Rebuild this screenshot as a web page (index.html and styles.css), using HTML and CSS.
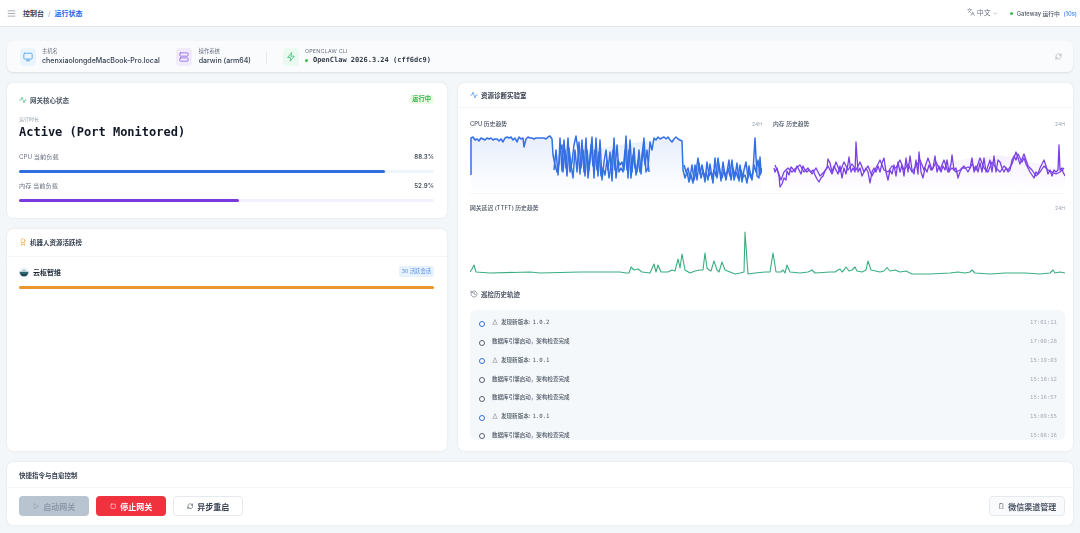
FILE: index.html
```html
<!DOCTYPE html>
<html lang="zh">
<head>
<meta charset="utf-8">
<title>运行状态</title>
<link rel="stylesheet" href="styles.css">
</head>
<body>
<header class="topbar">
  <div class="crumbs">
    <svg class="ic menu" viewBox="0 0 24 24"><path d="M3 5h18M3 12h18M3 19h18"/></svg>
    <span class="crumb">控制台</span><span class="sep">/</span><span class="crumb current">运行状态</span>
  </div>
  <div class="top-right">
    <svg class="ic lang" viewBox="0 0 24 24"><path d="m5 8 6 6M4 14l6-6 2-3M2 5h12M7 2h1M22 22l-5-10-5 10M14 18h6"/></svg>
    <span class="lang-text">中文</span>
    <svg class="ic chev" viewBox="0 0 24 24"><path d="m6 9 6 6 6-6"/></svg>
    <span class="gw"><i class="dot green"></i>Gateway 运行中 <b>(10s)</b></span>
  </div>
</header>

<main class="page">
  <section class="infobar">
    <div class="info">
      <span class="tile t-blue"><svg class="ic" viewBox="0 0 24 24"><rect x="2" y="3" width="20" height="14" rx="2"/><path d="M8 21h8M12 17v4"/></svg></span>
      <div class="info-text"><small>主机名</small><strong>chenxiaolongdeMacBook-Pro.local</strong></div>
    </div>
    <div class="info os">
      <span class="tile t-purple"><svg class="ic" viewBox="0 0 24 24"><rect x="2" y="2" width="20" height="8" rx="2"/><rect x="2" y="14" width="20" height="8" rx="2"/></svg></span>
      <div class="info-text"><small>操作系统</small><strong>darwin (arm64)</strong></div>
    </div>
    <div class="info cli">
      <span class="tile t-green"><svg class="ic" viewBox="0 0 24 24"><path d="M13 2 4 13h7l-1 9 10-12h-7z"/></svg></span>
      <div class="info-text"><small class="caps">OPENCLAW CLI</small><strong class="mono"><i class="dot green"></i>OpenClaw 2026.3.24 (cff6dc9)</strong></div>
    </div>
    <svg class="ic refresh" viewBox="0 0 24 24"><path d="M3 12a9 9 0 0 1 15-6.700L21 8M21 3v5h-5M21 12a9 9 0 0 1-15 6.700L3 16M3 21v-5h5"/></svg>
  </section>

  <div class="columns">
    <div class="left">
      <section class="card core">
        <div class="core-head">
          <h2><svg class="ic c-green" viewBox="0 0 24 24"><path d="M22 12h-4l-3 9L9 3l-3 9H2"/></svg>网关核心状态</h2>
          <span class="badge-run">运行中</span>
        </div>
        <p class="uptime-label">运行时长</p>
        <p class="uptime">Active (Port Monitored)</p>
        <div class="meter">
          <div class="meter-row"><span>CPU 当前负载</span><b>88.3%</b></div>
          <div class="track track-blue"><div class="fill fill-blue" style="width:88.3%"></div></div>
        </div>
        <div class="meter">
          <div class="meter-row"><span>内存 当前负载</span><b>52.9%</b></div>
          <div class="track track-purple"><div class="fill fill-purple" style="width:52.9%"></div></div>
        </div>
      </section>

      <section class="card board">
        <h2 class="board-title"><svg class="ic c-orange" viewBox="0 0 24 24"><circle cx="12" cy="8" r="6"/><path d="M15.5 13.5 17 22l-5-3-5 3 1.5-8.5"/></svg>机器人资源活跃榜</h2>
        <div class="board-body">
          <div class="bot-row">
            <span class="bot-name"><svg class="bot-logo" viewBox="0 0 20 20"><circle cx="10" cy="10" r="9.5" fill="#eef4f5"/><path d="M6 7.5c1-3 7-3 8 0z" fill="#7fa6b0"/><path d="M1 9.5h18c0 5.500-4 9.500-9 9.500s-9-4-9-9.500z" fill="#2f6672"/><path d="M4 14h12l-2 4H6z" fill="#1e4650"/></svg>云枢智维</span>
            <span class="badge-bot">30 活跃会话</span>
          </div>
          <div class="track-orange"></div>
        </div>
      </section>
    </div>

    <section class="card lab">
      <h2 class="lab-title"><svg class="ic c-blue" viewBox="0 0 24 24"><path d="M22 12h-4l-3 9L9 3l-3 9H2"/></svg>资源诊断实验室</h2>
      <div class="lab-body">
        <div class="chart-grid">
          <div class="chart">
            <div class="chart-head"><span>CPU 历史趋势</span><em>24H</em></div>
            <svg class="plot" viewBox="470 133 292 60" preserveAspectRatio="none">
              <defs>
                <linearGradient id="gBlue" x1="0" y1="0" x2="0" y2="1"><stop offset="0" stop-color="#3b78e7" stop-opacity=".12"/><stop offset="1" stop-color="#3b78e7" stop-opacity="0"/></linearGradient>
                <linearGradient id="gPurple" x1="0" y1="0" x2="0" y2="1"><stop offset="0" stop-color="#7c3aed" stop-opacity=".07"/><stop offset="1" stop-color="#7c3aed" stop-opacity="0"/></linearGradient>
              </defs>
              <polygon class="area-blue" points="471,193 471,138 553,138 553,155 653,140 683,140 683,165 762,165 762,193"/>
              <polyline class="line blue" points="471,175 471,138 473,137 475,140 477,139 479,141 481,138 483,139 485,140 487,138 489,139 491,138 493,140 495,139 497,139 499,141 501,139 503,142 505,138 507,137 509,138 511,137 513,140 515,138 517,142 519,137 521,139 523,138 524,147 526,139 528,137 530,138 532,138 534,139 536,138 538,138 540,138 542,138 544,138 546,139 548,137 550,136 552,139 553,155 555,165 557,172 559,163 560,138 562,171 564,140 566,168 568,138 570,172 572,162 574,145 576,136 578,150 580,174 582,140 584,172 586,138 588,178 590,160 592,137 594,178 596,138 598,176 600,140 602,180 604,162 606,150 608,170 610,152 612,181 614,138 616,178 618,160 620,165 622,162 624,170 626,136 628,178 630,140 632,172 634,148 636,175 638,160 640,172 642,155 644,138 646,172 648,168 650,142 652,150 654,138 656,140 658,137 660,139 662,138 664,137 666,139 668,137 670,140 672,142 674,139 676,137 678,139 680,140 682,141 683,170 685,178 687,172 689,182 691,175 693,183 695,165 697,180 699,163 701,178 703,170 705,182 707,162 709,176 711,172 713,183 715,158 717,178 719,165 721,181 723,162 725,176 727,172 729,160 731,180 733,168 735,176 737,163 739,181 741,170 743,177 745,175 747,183 749,166 751,178 753,172 755,138 757,176 759,178 760,157 761,172 762,168"/>
              <polyline class="line blue" points="554,170 556,150 558,175 560,150 562,145 563,172 565,150 567,176 569,148 571,165 573,178 575,150 577,172 579,142 581,168 583,150 585,176 587,150 589,170 591,145 593,166 595,150 597,170 599,152 601,176 603,168 605,175 607,160 609,178 611,165 613,150 615,170 617,145 619,172 621,168 623,172 625,150 627,170 629,150 631,178 633,155 635,168 637,172 639,150 641,174 643,148 645,165 647,150 649,172"/>
              <polyline class="line blue" points="684,165 686,172 688,168 690,178 692,165 694,180 696,172 698,158 700,174 702,165 704,176 706,172 708,180 710,164 712,178 714,170 716,176 718,158 720,172 722,178 724,170 726,180 728,168 730,176 732,160 734,180 736,172 738,178 740,165 742,182 744,170 746,162 748,178 750,172 752,180 754,165 756,172 758,160 760,175 762,170"/>
            </svg>
          </div>
          <div class="chart">
            <div class="chart-head"><span>内存 历史趋势</span><em>24H</em></div>
            <svg class="plot" viewBox="773 133 292 60" preserveAspectRatio="none">
              <polygon class="area-purple" points="774,193 774,170 856,165 900,165 960,160 1000,155 1065,170 1065,193"/>
              <polyline class="line purple" points="774,168 775,172 777,168 779,176 780,187 782,184 784,178 786,180 787,171 789,175 791,167 793,169 795,172 797,166 799,170 801,174 803,166 805,170 807,172 809,170 811,172 813,170 815,175 817,179 819,182 821,178 823,176 825,171 827,168 828,159 830,163 832,172 834,166 836,170 838,174 840,166 842,178 844,168 846,174 848,164 849,157 851,172 853,168 855,172 856,142 858,172 860,168 862,176 864,172 866,168 868,172 870,183 872,172 874,168 876,172 878,166 880,172 882,163 884,158 886,172 888,180 890,170 892,174 894,165 896,176 898,162 900,172 902,165 904,176 906,158 908,172 910,156 912,170 914,174 916,160 918,174 919,152 921,172 923,178 925,168 927,172 929,165 931,170 933,168 935,156 937,172 939,166 941,172 943,166 945,170 947,160 949,172 951,164 952,155 954,170 956,168 958,178 960,172 962,168 964,168 966,168 968,167 970,168 972,158 974,172 976,166 978,172 980,163 982,172 984,158 986,172 988,166 990,160 992,172 994,156 996,172 998,160 1000,162 1002,168 1004,172 1006,168 1008,172 1010,170 1012,160 1014,156 1016,160 1018,154 1020,158 1022,162 1024,158 1026,164 1028,168 1030,172 1032,175 1034,178 1036,172 1038,174 1040,168 1042,164 1044,160 1046,166 1048,174 1050,170 1052,176 1054,170 1056,172 1058,170 1059,145 1060,170 1062,168 1063,172 1065,176"/>
              <polyline class="line purple" points="775,165 778,172 781,180 784,172 788,168 792,172 796,168 800,165 804,172 808,168 812,174 816,168 820,176 824,172 828,166 832,174 836,162 840,172 844,162 848,170 852,164 856,170 860,162 864,172 868,166 872,176 876,168 880,160 884,170 888,172 892,166 896,168 900,160 904,170 908,164 912,172 916,166 920,160 924,170 928,158 932,170 936,162 940,170 944,160 948,172 952,168 956,172 960,170 964,166 968,172 972,164 976,170 980,158 984,168 988,172 992,162 996,168 1000,172 1004,166 1008,170 1012,164 1016,152 1020,164 1024,154 1028,166 1032,170 1036,176 1040,172 1044,166 1048,170 1052,172 1056,174 1060,172 1064,168"/>
            </svg>
          </div>
        </div>
        <hr class="rule">
        <div class="chart wide">
          <div class="chart-head"><span>网关延迟 (TTFT) 历史趋势</span><em>24H</em></div>
          <svg class="plot tall" viewBox="470 225 595 55" preserveAspectRatio="none">
            <polyline class="line green" points="470,272 472,269 474,265 476,272 490,273 530,272 540,273 580,272 620,272 626,273 629,273 631,267 634,270 638,269 642,272 650,273 654,264 656,272 658,265 661,272 668,272 672,270 675,271 678,259 680,268 682,254 685,270 690,273 695,271 700,270 703,270 705,253 707,268 709,270 711,271 714,261 717,270 719,272 722,262 725,270 730,272 735,274 740,273 744,272 745,232 748,274 755,273 765,272 770,272 773,253 776,272 781,272 783,270 785,273 787,265 790,272 800,273 808,272 812,270 815,273 830,272 835,272 838,270 840,269 842,272 844,270 846,267 849,271 852,270 855,267 857,271 862,272 866,270 868,261 871,270 880,272 884,271 887,267.500 890,271 895,270 900,272 906,271 908,272 912,274 930,274 950,273 958,272 965,273 970,272 972,270 975,273 990,274 1005,273 1025,273 1040,274 1050,273 1053,270 1055,273 1060,272 1065,273"/>
          </svg>
        </div>
        <h3 class="history-title"><svg class="ic c-gray" viewBox="0 0 24 24"><path d="M3 12a9 9 0 1 0 3-6.700L3 8M3 3v5h5M12 7v5l4 2"/></svg>巡检历史轨迹</h3>
        <div class="history">
          <div class="log"><i class="ring r-blue"></i><span class="msg"><svg class="ic up" viewBox="0 0 24 24"><path d="M12 4 5 18M12 4l7 14M3 21h18"/></svg>发现新版本: <code>1.0.2</code></span><time>17:01:11</time></div>
          <div class="log"><i class="ring r-gray"></i><span class="msg">数据库引擎启动，架构检查完成</span><time>17:00:28</time></div>
          <div class="log"><i class="ring r-blue"></i><span class="msg"><svg class="ic up" viewBox="0 0 24 24"><path d="M12 4 5 18M12 4l7 14M3 21h18"/></svg>发现新版本: <code>1.0.1</code></span><time>15:19:03</time></div>
          <div class="log"><i class="ring r-gray"></i><span class="msg">数据库引擎启动，架构检查完成</span><time>15:18:12</time></div>
          <div class="log"><i class="ring r-gray"></i><span class="msg">数据库引擎启动，架构检查完成</span><time>15:16:57</time></div>
          <div class="log"><i class="ring r-blue"></i><span class="msg"><svg class="ic up" viewBox="0 0 24 24"><path d="M12 4 5 18M12 4l7 14M3 21h18"/></svg>发现新版本: <code>1.0.1</code></span><time>15:09:55</time></div>
          <div class="log"><i class="ring r-gray"></i><span class="msg">数据库引擎启动，架构检查完成</span><time>15:08:16</time></div>
        </div>
      </div>
    </section>
  </div>

  <section class="card controls">
    <h2 class="controls-title">快捷指令与自愈控制</h2>
    <div class="actions">
      <div class="action-group">
        <button class="btn btn-disabled"><svg class="ic" viewBox="0 0 24 24"><path d="m6 3 14 9-14 9z"/></svg>启动网关</button>
        <button class="btn btn-stop"><svg class="ic" viewBox="0 0 24 24"><rect x="4" y="4" width="16" height="16" rx="2"/></svg>停止网关</button>
        <button class="btn btn-plain"><svg class="ic" viewBox="0 0 24 24"><path d="M3 12a9 9 0 0 1 15-6.700L21 8M21 3v5h-5M21 12a9 9 0 0 1-15 6.700L3 16M3 21v-5h5"/></svg>异步重启</button>
      </div>
      <button class="btn btn-wechat"><svg class="ic" viewBox="0 0 24 24"><rect x="6" y="2" width="12" height="20" rx="2"/></svg>微信渠道管理</button>
    </div>
  </section>
</main>
</body>
</html>
```
FILE: styles.css
```css
* { box-sizing: border-box; }
html, body { margin: 0; height: 100%; }
body {
  width: 1080px;
  height: 533px;
  overflow: hidden;
  background: #f4f7f9;
  color: #1f2937;
  font-family: Inter, "Noto Sans CJK SC", sans-serif;
  font-size: 6px;
  filter: blur(.4px);
}
h2, h3, p { margin: 0; }
.ic { width: 1em; height: 1em; fill: none; stroke: currentColor; stroke-width: 2; stroke-linecap: round; stroke-linejoin: round; flex: none; }

.topbar { height: 27px; background: #fff; border-bottom: 1px solid #e4e8ec; display: flex; align-items: center; justify-content: space-between; padding: 0 3px 0 7px; }
.crumbs { display: flex; align-items: center; font-size: 7px; font-weight: 600; color: #374151; }
.menu { font-size: 9px; color: #6b7280; margin-right: 7px; stroke-width: 1.6; }
.sep { margin: 0 4px; color: #9ca3af; font-weight: 400; }
.current { color: #2563eb; }
.top-right { display: flex; align-items: center; color: #6b7280; font-size: 7px; }
.lang { font-size: 8px; margin-right: 2px; stroke-width: 1.6; position: relative; top: -1px; }
.lang-text { font-size: 7px; position: relative; top: -1px; }
.chev { font-size: 5px; margin: 0 12px 0 2px; }
.gw { display: flex; align-items: center; font-size: 5.800px; gap: 2px; white-space: pre; color: #4b5563; font-weight: 500; }
.gw b { color: #3b82f6; font-weight: 500; }
.dot { display: inline-block; width: 3px; height: 3px; border-radius: 50%; flex: none; }
.dot.green { background: #3fb950; margin-right: 2px; }

.page { padding: 14px 7px 0; display: flex; flex-direction: column; gap: 11px; }
.infobar { height: 31px; background: #f9fbfc; border-radius: 6px; box-shadow: 0 1px 2px rgba(60,80,100,.14); display: flex; align-items: center; padding: 0 11px 0 13px; }
.info { display: flex; align-items: center; gap: 6px; }
.os { margin-left: 16px; gap: 7px; }
.cli { margin-left: 32px; position: relative; }
.cli::before { content: ""; position: absolute; left: -17px; top: 4px; height: 12px; width: 1px; background: #e5e9ed; }
.tile { width: 16px; height: 18px; border-radius: 4px; display: flex; align-items: center; justify-content: center; font-size: 10px; }
.t-blue { background: #eaf4fd; color: #4aa3e8; }
.t-purple { background: #f1ebfd; color: #9166ec; }
.t-green { background: #eafaf0; color: #3fc07a; }
.info-text { display: flex; flex-direction: column; gap: 2px; }
.info-text small { font-size: 5.300px; line-height: 6px; color: #6b7280; }
.info-text .caps { letter-spacing: .25px; }
.info-text strong { font-size: 7.050px; line-height: 9px; font-weight: 500; color: #374151; white-space: nowrap; }
.info-text .mono { font-family: "DejaVu Sans Mono", monospace; font-size: 7px; font-weight: 700; display: flex; align-items: center; color: #333c49; }
.mono .dot { margin-right: 5px; }
.refresh { margin-left: auto; font-size: 7px; color: #8a939f; stroke-width: 1.6; }

.columns { display: grid; grid-template-columns: 440px 615px; gap: 11px; height: 368px; }
.left { display: flex; flex-direction: column; gap: 11px; }
.card { background: #fff; border-radius: 6px; box-shadow: 0 0 2px rgba(60,80,100,.16); }
.card h2, .card h3 { display: flex; align-items: center; font-size: 6.500px; font-weight: 600; color: #4b5563; }
.card h2 .ic, .card h3 .ic { font-size: 8px; margin-right: 3px; }
.c-green { color: #42b883; }
.c-orange { color: #f5a742; }
.c-blue { color: #4f8de8; }
.c-gray { color: #6b7280; }

.core { height: 135px; padding: 12px 13px 0 12px; }
.core-head { display: flex; align-items: center; justify-content: space-between; height: 9px; }
.badge-run { background: #eefbe7; color: #35b34a; font-size: 6.300px; font-weight: 600; padding: 1px 3px; border-radius: 3px; line-height: 7px; }
.uptime-label { font-size: 5px; color: #9ca3af; line-height: 6px; margin-top: 12px; }
.uptime { font-family: "DejaVu Sans Mono", monospace; font-weight: 700; font-size: 12px; line-height: 15px; margin-top: 3px; color: #111827; }
.meter { margin-top: 9.500px; }
.uptime + .meter { margin-top: 13px; }
.meter-row { display: flex; justify-content: space-between; font-size: 6.200px; line-height: 8px; color: #6b7280; height: 8px; margin-bottom: 8.500px; }
.meter-row b { font-weight: 600; color: #4b5563; }
.track { height: 3px; border-radius: 2px; }
.track-blue { background: #eff5fd; }
.track-purple { background: #f4f0fd; }
.fill { height: 100%; border-radius: 2px; }
.fill-blue { background: #2f6de0; }
.fill-purple { background: #7b38dc; }

.board { flex: 1; display: flex; flex-direction: column; }
.board-title.board-title { height: 28px; padding: 0 12px 1px; border-bottom: 1px solid #f3f5f7; color: #374151; }
.board-title .ic { margin-right: 2px; }
.board-body { padding: 9px 13px 0 12px; }
.bot-row { display: flex; align-items: center; justify-content: space-between; height: 11px; }
.bot-name { display: flex; align-items: center; gap: 4px; font-size: 7px; font-weight: 600; color: #1f2937; }
.bot-logo { width: 10px; height: 10px; }
.badge-bot { background: #e8f2fe; color: #4f8ee8; font-size: 5.300px; padding: 2px 3px; border-radius: 2px; line-height: 7px; }
.track-orange { height: 3px; border-radius: 2px; background: #e8962e; margin-top: 8.500px; }

.lab { display: flex; flex-direction: column; overflow: hidden; }
.lab-title.lab-title { height: 25px; padding: 0 12px; border-bottom: 1px solid #f3f5f7; color: #374151; flex: none; }
.lab-body { padding: 12px 8px 11px 12px; flex: 1; display: flex; flex-direction: column; min-height: 0; }
.chart-grid { display: grid; grid-template-columns: 292px 292px; gap: 11px; }
.chart-head { display: flex; justify-content: space-between; font-size: 5.800px; font-weight: 500; color: #4b5563; line-height: 8px; height: 8px; }
.chart-head em { font-style: normal; font-weight: 400; color: #9ca3af; font-size: 5px; }
.plot { display: block; width: 100%; height: 60px; margin-top: 5px; }
.plot.tall { height: 55px; margin-top: 13px; }
.wide { width: 595px; margin-top: 10px; }
.rule { border: 0; border-top: 1px solid #f3f5f7; margin: 0; width: 595px; }
.line { fill: none; stroke-width: 1.500; stroke-linejoin: round; }
.blue { stroke: #3470e4; }
.purple { stroke: #7a40e6; stroke-width: 1.300; }
.green { stroke: #3aae80; stroke-width: 1.100; }
.area-blue { fill: url(#gBlue); }
.area-purple { fill: url(#gPurple); }
.history-title.history-title { height: 9px; margin-top: 9px; }
.history { margin-top: 12px; width: 595px; flex: 1; min-height: 0; overflow: hidden; background: #f5f8fa; border-radius: 6px; padding: 3px 8px 0 8.500px; }
.log { display: flex; align-items: center; height: 18.750px; font-size: 5.550px; color: #4b5563; font-weight: 500; flex: none; }
.ring { width: 6px; height: 6px; border-radius: 50%; border: 1.600px solid; background: #fff; margin-right: 7.500px; position: relative; top: 1.500px; flex: none; }
.r-blue { border-color: #2f6de0; }
.r-gray { border-color: #555f6d; }
.msg { display: flex; align-items: center; flex: 1; }
.msg code { font-family: "DejaVu Sans Mono", monospace; font-size: 5.700px; margin-left: 2px; }
.up { font-size: 6px; margin: 0 3px 0 0; color: #6b7280; }
time { font-family: "DejaVu Sans Mono", monospace; font-size: 5.600px; color: #a3abb6; }

.controls { height: 63px; display: flex; flex-direction: column; }
.controls-title.controls-title { height: 26px; padding: 0 12px; border-bottom: 1px solid #f3f5f7; color: #374151; flex: none; }
.actions { display: flex; justify-content: space-between; align-items: center; padding: 8px 8px 0 12px; }
.action-group { display: flex; gap: 7px; }
.btn { height: 20px; width: 70px; border-radius: 4px; border: 0; font: 600 8px Inter, "Noto Sans CJK SC", sans-serif; display: flex; align-items: center; justify-content: center; gap: 4px; padding: 0; }
.btn .ic { font-size: 6.500px; }
.btn-disabled { background: #b9c4d1; color: #8e9aa9; }
.btn-stop { background: #f0323f; color: #fff; }
.btn-plain { background: #fff; border: 1px solid #e6eaee; color: #374151; }
.btn-wechat { width: 76px; background: #f8fafc; border: 1px solid #e6eaee; color: #4b5563; }
```
